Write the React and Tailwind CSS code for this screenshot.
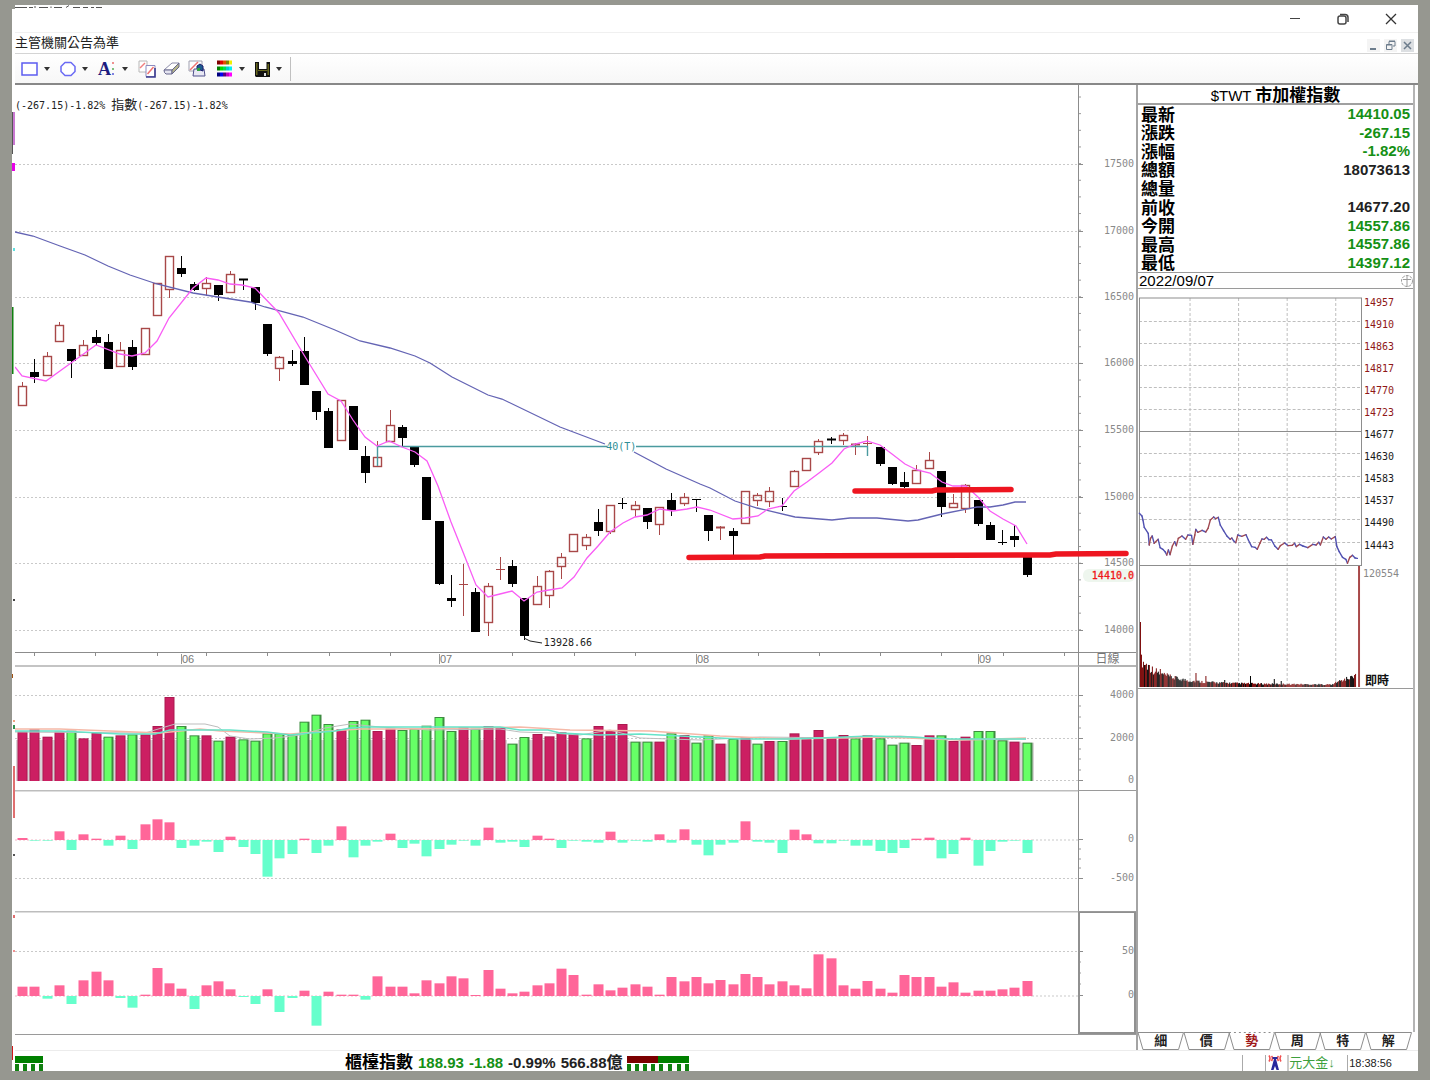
import React from "react";

const CJK = "font-['Liberation_Sans','Noto_Sans_CJK_TC',sans-serif]";
const MONO = "font-['DejaVu_Sans_Mono','Noto_Sans_CJK_TC',monospace]";

const STEP = 12.25;
const barX = (i) => 22 + STEP * i;

/* kind, high, body top, body bottom, low */
const CANDLES = [
  ["r", 382, 386, 405, 405], ["b", 359, 372, 377, 383], ["r", 352, 356, 375, 375], ["r", 322, 325, 341, 341],
  ["b", 349, 349, 361, 378], ["r", 340, 345, 355, 355], ["b", 330, 337, 343, 345], ["b", 334, 342, 369, 369],
  ["r", 342, 350, 366, 366], ["b", 340, 347, 367, 370], ["r", 328, 328, 354, 354], ["r", 283, 283, 315, 315],
  ["r", 256, 256, 289, 298], ["b", 256, 268, 274, 277], ["b", 282, 284, 290, 291], ["r", 277, 283, 288, 296],
  ["b", 285, 285, 295, 301], ["r", 271, 274, 292, 292], ["b", 279, 279, 281, 290], ["b", 287, 287, 303, 310],
  ["b", 324, 324, 354, 356], ["r", 356, 357, 368, 381], ["b", 350, 361, 364, 366], ["b", 337, 351, 385, 385],
  ["b", 391, 391, 412, 420], ["b", 408, 411, 448, 448], ["r", 400, 400, 440, 440], ["b", 406, 406, 450, 450],
  ["b", 446, 456, 473, 483], ["r", 441, 457, 466, 466], ["r", 410, 425, 441, 441], ["b", 425, 427, 438, 447],
  ["b", 447, 447, 465, 467], ["b", 477, 477, 520, 520], ["b", 521, 521, 584, 585], ["b", 575, 598, 601, 607],
  ["r", 564, 584, 584, 616], ["b", 588, 592, 632, 632], ["r", 583, 586, 622, 636], ["r", 557, 569, 569, 580],
  ["b", 560, 566, 584, 587], ["b", 598, 598, 636, 640], ["r", 576, 586, 604, 604], ["r", 570, 571, 595, 608],
  ["r", 553, 557, 566, 579], ["r", 534, 534, 551, 551], ["r", 534, 537, 545, 550], ["b", 509, 522, 531, 536],
  ["r", 505, 505, 531, 534], ["b", 498, 503, 503, 509], ["r", 501, 505, 509, 517], ["b", 508, 508, 522, 529],
  ["r", 507, 507, 524, 535], ["b", 493, 500, 510, 516], ["r", 493, 497, 503, 506], ["b", 499, 499, 499, 512],
  ["b", 515, 515, 531, 541], ["r", 526, 527, 528, 540], ["b", 528, 531, 536, 555], ["r", 491, 491, 523, 523],
  ["r", 493, 495, 500, 506], ["r", 487, 491, 501, 507], ["b", 498, 506, 506, 511], ["r", 470, 471, 486, 486],
  ["r", 458, 458, 470, 470], ["r", 439, 441, 452, 455], ["b", 437, 439, 441, 444], ["r", 433, 435, 440, 445],
  ["r", 443, 444, 445, 455], ["r", 436, 443, 443, 447], ["b", 447, 447, 464, 466], ["b", 467, 467, 484, 485],
  ["b", 472, 482, 487, 488], ["r", 465, 470, 483, 483], ["r", 452, 460, 468, 468], ["b", 471, 471, 507, 517],
  ["r", 494, 503, 507, 507], ["r", 484, 485, 508, 513], ["b", 500, 500, 524, 526], ["b", 522, 525, 540, 540],
  ["b", 530, 542, 542, 545], ["b", 525, 536, 540, 547], ["b", 556, 556, 575, 577],
];

const BLUE_A =
  "15,232 33,236 60,246 85,255 108,266 130,275 157,284 193,293 218,297 250,302 265,307 303,317 335,330 360,341 390,348 415,356 430,363 452,377 488,395 502,399 560,427 605,444";
const BLUE_B =
  "634,452 666,469 700,484 710,488 735,501 757,508 795,517 832,520 850,518 877,518 908,521 918,520 942,514 977,507 990,507 1003,505 1015,502 1026,502";
const PINK =
  "15,367 22,376 46,381 71,363 96,345 120,354 132,356 145,353 157,341 169,318 193,288 206,278 218,280 230,284 242,285 255,288 279,313 304,355 328,394 341,401 353,420 365,437 377,446 389,441 402,447 415,452 427,461 438,486 451,522 463,552 476,585 488,597 500,594 512,591 524,601 537,592 549,590 562,588 574,577 587,558 598,546 610,532 623,523 635,517 647,515 660,509 673,511 687,509 697,507 710,510 733,519 745,518 758,516 768,509 782,506 794,491 807,482 819,473 832,463 844,449 855,444 867,441 880,445 892,454 905,464 917,470 930,473 942,482 953,486 966,486 978,497 990,511 1003,519 1016,526 1027,544";

const PRICE_MARKS = [
  [164, "17500"], [231, "17000"], [297, "16500"], [363, "16000"],
  [430, "15500"], [497, "15000"], [563, "14500"], [630, "14000"],
];
const PRICE_TICKS = Array.from({ length: 33 }, (_, i) => 97 + i * 16.65);

/* r = closed up, g = closed down; the number is the bar's top in thirds of a unit */
const VOLUME = [
  "r275", "r268", "r290", "r275", "g272", "r295", "r278", "g290", "r286", "g283", "r283", "r258", "r171", "g258",
  "g286", "r286", "g302", "r290", "g298", "g302", "g280", "g280", "g284", "g245", "g224", "g252", "r268", "g243",
  "g239", "r273", "r266", "g270", "g266", "g257", "g231", "g273", "r262", "g266", "r258", "r262", "g311", "g291",
  "r282", "r289", "r277", "r282", "g295", "r258", "r272", "r252", "g305", "g305", "r305", "g280", "r285", "g308",
  "g286", "r311", "g296", "r292", "g311", "r303", "g303", "r280", "r291", "r270", "r291", "r285", "g295", "r286",
  "g295", "g314", "g308", "r315", "r286", "g286", "r303", "r290", "g273", "g273", "g301", "r305", "g308",
].map((s) => ({ up: s[0] === "r", top: 640 + Number(s.slice(1)) / 3 }));

const FLOW_A = [
  6, -2, -2, 26, -30, 17, 4, -17, 13, -27, 47, 62, 53, -24, -17, -5, -36, 10, -21, -42, -110, -55, -42, 4, -39, -17,
  41, -52, -17, -5, 19, -24, -11, -49, -27, -14, -2, -17, 37, -8, -5, -21, 13, 4, -24, -2, -5, -8, 25, -8, -2, -5, 17,
  -8, 32, -14, -46, -14, -8, 56, -5, -8, -39, 31, 17, -10, -10, -2, -17, -17, -33, -39, -24, 4, 7, -55, -42, 7, -77,
  -33, -5, -2, -39,
];
const FLOW_B = [
  28, 28, -8, 32, -24, 47, 73, 47, -6, -35, 4, 84, 38, 22, -39, 32, 44, 20, -3, -24, 20, -48, -6, 16, -89, 13, 4, 4,
  -11, 59, 28, 28, 8, 47, 38, 59, 53, 3, 78, 22, 8, 13, 32, 38, 82, 63, 4, 35, 17, 25, 35, 28, 4, 57, 44, 57, 38, 48,
  35, 66, 57, 35, 44, 32, 23, 125, 113, 32, 22, 45, 22, 10, 63, 57, 57, 28, 41, 10, 16, 16, 20, 25, 45,
];

function Plot({ top, height, label, children }) {
  return (
    <svg
      role="img"
      aria-label={label}
      className="block min-w-0 flex-1"
      height={height}
      viewBox={`15 ${top} 1063 ${height}`}
      preserveAspectRatio="none"
    >
      {children}
    </svg>
  );
}

function Grid({ y, from = 15 }) {
  return <line x1={from} x2="1078" y1={y + 0.5} y2={y + 0.5} stroke="#c9c9c9" strokeDasharray="2 2" />;
}

function Axis({ top, height, marks, ticks = [], boxed, children }) {
  return (
    <svg
      className={`block w-[58px] shrink-0 text-[10px] ${MONO}`}
      height={height}
      viewBox={`1078 ${top} 58 ${height}`}
    >
      <line x1="1078.5" x2="1078.5" y1={top} y2={top + height} stroke="#8c8c8c" />
      {ticks.map((y) => (
        <line key={y} x1="1079" x2="1081" y1={y} y2={y} stroke="#9a9a9a" />
      ))}
      {marks.map(([y, t]) => (
        <g key={t}>
          <line x1="1078" x2="1083" y1={y + 0.5} y2={y + 0.5} stroke="#8c8c8c" />
          <text x="1134" y={y + 3} textAnchor="end" fill="#8a8a8a">{t}</text>
        </g>
      ))}
      {boxed && <rect x="1079" y={top + 1} width="56" height={height - 2} fill="none" stroke="#909090" strokeWidth="2" />}
      {children}
    </svg>
  );
}

function PricePanel() {
  return (
    <div className="relative flex">
      <Plot top={85} height={567} label="日線圖">
        {PRICE_MARKS.map(([y]) => <Grid key={y} y={y} />)}
        {CANDLES.map(([kind, high, top, bottom, low], i) => {
          const x = Math.round(barX(i));
          const color = kind === "r" ? "#a84848" : "#000";
          if (bottom - top < 2.5) {
            return (
              <g key={i} stroke={color}>
                <line x1={x + 0.5} x2={x + 0.5} y1={high} y2={low} strokeWidth="1" />
                <line x1={x - 4} x2={x + 5} y1={top + 0.5} y2={top + 0.5} strokeWidth={bottom > top ? 2 : 1} />
              </g>
            );
          }
          return (
            <g key={i} stroke={color}>
              <line x1={x + 0.5} x2={x + 0.5} y1={high} y2={top} />
              <line x1={x + 0.5} x2={x + 0.5} y1={bottom} y2={low} />
              <rect x={x - 3.5} y={top + 0.5} width="8" height={bottom - top - (kind === "b" ? 1 : 0)} fill={kind === "r" ? "none" : "#000"} strokeWidth={kind === "r" ? 1.4 : 1} />
            </g>
          );
        })}
        <path d="M377.5 466V446.5H607M636 446.5H867.5V456" fill="none" stroke="#4a9a9f" strokeWidth="1.4" />
        <polyline points={BLUE_A} fill="none" stroke="#6464b4" strokeWidth="1.3" />
        <polyline points={BLUE_B} fill="none" stroke="#6464b4" strokeWidth="1.3" />
        <polyline points={PINK} fill="none" stroke="#f95cf5" strokeWidth="1.3" />
        <polyline points="524,638 530,641 542,643" fill="none" stroke="#222" />
      </Plot>
      <Axis top={85} height={567} marks={PRICE_MARKS} ticks={PRICE_TICKS}>
        <rect x="1083" y="569" width="52" height="13" rx="6" fill="#eef6ee" />
        <text x="1134" y="579" textAnchor="end" fill="#f01818" stroke="#f01818" strokeWidth="0.3">14410.0</text>
      </Axis>
      <svg
        className="absolute inset-0 h-full w-full"
        viewBox="15 85 1121 567"
        preserveAspectRatio="none"
        fill="none"
        stroke="#ee1520"
        strokeWidth="5.5"
        strokeLinecap="round"
        aria-hidden="true"
      >
        <path d="M855 491H932L936 490L1011 489.5" />
        <path d="M689 557.5L760 557L765 556L905 555.5L1050 555L1056 554L1126 553.5" />
      </svg>
      <span className={`absolute left-[53%] top-[354px] -ml-[3px] text-[10px] text-[#2f8f96] ${MONO}`}>40(T)</span>
      <span className={`absolute left-[47%] top-[550px] ml-[2px] text-[10px] text-[#222] ${MONO}`}>13928.66</span>
    </div>
  );
}

const DATE_TICKS = [34, 95, 157, 206, 267, 329, 390, 512, 574, 635, 758, 819, 880, 941, 1003, 1064];
const MONTHS = [[181, "06"], [439, "07"], [696, "08"], [978, "09"]];

function DateStrip() {
  return (
    <div className="flex">
      <div className="relative flex min-w-0 flex-1">
        <Plot top={652} height={15} label="月份">
          <line x1="15" x2="1078" y1="652.5" y2="652.5" stroke="#8c8c8c" />
          <line x1="15" x2="1078" y1="666" y2="666" stroke="#c4c4c4" strokeWidth="2" />
          {DATE_TICKS.map((x) => <line key={x} x1={x + 0.5} x2={x + 0.5} y1="653" y2="656" stroke="#8c8c8c" />)}
        </Plot>
        {MONTHS.map(([x, t]) => (
          <span
            key={t}
            className="absolute top-[2px] h-[10px] border-l border-[#999] text-[11px] leading-[10px] text-[#777] font-['Liberation_Sans',sans-serif]"
            style={{ left: `${((x - 15) / 1063) * 100}%` }}
          >
            {t}
          </span>
        ))}
      </div>
      <div className={`h-[15px] w-[58px] shrink-0 border-b-2 border-l border-t border-b-[#b4b4b4] border-l-[#8c8c8c] border-t-[#8c8c8c] text-center text-[12px] leading-[13px] text-[#777] ${CJK}`}>
        日線
      </div>
    </div>
  );
}

function VolumePanel() {
  return (
    <div className="flex">
      <Plot top={667} height={123} label="成交量">
        <Grid y={695} />
        <Grid y={738} />
        <Grid y={780} from={1032} />
        {VOLUME.map((v, i) => {
          const x = Math.round(barX(i));
          return (
            <g key={i}>
              <rect x={x - 6} y={Math.max(v.top, 740)} width="13" height={781 - Math.max(v.top, 740)} fill="#d9d3d6" />
              <rect x={x - 4.5} y={v.top} width="10" height={781 - v.top} fill={v.up ? "#ac1a50" : "#3d8c40"} />
              <rect x={x - 3.5} y={v.top + 1} width={v.up ? 8 : 7} height={780 - v.top} fill={v.up ? "#cc1f62" : "#66ff66"} />
            </g>
          );
        })}
        <polyline fill="none" stroke="#bdbdbd" points="15,732 145,733 165,727 175,724 205,724 218,727 230,736 250,739 275,738 300,735 325,728 350,724 380,727 430,730 500,729 520,732 550,733 580,735 610,730 640,738 700,740 760,737 850,738 900,736 960,740 1026,739" />
        <polyline fill="none" stroke="#f5b9a8" strokeWidth="1.5" points="15,729 60,729 110,731 160,733 180,731 200,729 220,731 290,734 330,731 360,729 400,729 470,728 520,727 570,730 650,731 720,736 790,739 880,737 960,740 1026,738" />
        <polyline fill="none" stroke="#66e3c8" strokeWidth="1.5" points="15,731 60,731 120,734 155,734 170,730 230,730 267,732 290,735 310,733 335,731 350,728 365,727 500,727 520,730 548,730 560,733 600,735 640,734 680,736 720,738 740,739 790,739 820,738 870,736 910,737 950,739 1026,739" />
      </Plot>
      <Axis top={667} height={123} marks={[[695, "4000"], [738, "2000"], [780, "0"]]} ticks={[706, 717, 728, 749, 759, 770]} />
    </div>
  );
}

function FlowPanel({ top, height, zero, grid, data, label, marks, ticks, boxed }) {
  return (
    <div className="flex">
      <Plot top={top} height={height} label={label}>
        <line x1="15" x2="1078" y1={top + 0.5} y2={top + 0.5} stroke="#bdbdbd" strokeWidth="2" />
        <Grid y={grid} />
        <line x1="15" x2="1032" y1={zero} y2={zero} stroke="#f3b6c6" strokeDasharray="2 2" />
        <Grid y={zero - 0.5} from={1032} />
        {data.map((v, i) => {
          const h = Math.abs(v) / 3;
          return (
            <rect key={i} x={Math.round(barX(i)) - 4.5} y={v > 0 ? zero - h : zero} width="10" height={h} fill={v > 0 ? "#ff6699" : "#66ffcc"} />
          );
        })}
      </Plot>
      <Axis top={top} height={height} marks={marks} ticks={ticks} boxed={boxed}>
        <line x1="1078" x2="1136" y1={top + 0.5} y2={top + 0.5} stroke="#9a9a9a" />
      </Axis>
    </div>
  );
}

const QUOTES = [
  ["最新", "14410.05", true], ["漲跌", "-267.15", true], ["漲幅", "-1.82%", true],
  ["總額", "18073613", false], ["總量", "", false], ["前收", "14677.20", false],
  ["今開", "14557.86", true], ["最高", "14557.86", true], ["最低", "14397.12", true],
];

const LEVELS = [
  [302, "14957"], [324, "14910"], [346, "14863"], [368, "14817"], [390, "14770"], [412, "14723"],
  [434, "14677"], [456, "14630"], [478, "14583"], [500, "14537"], [522, "14490"], [545, "14443"],
];

const INTRADAY = [
  [205, 700], [213, 708], [216, 720], [220, 742], [232, 760], [235, 795], [239, 775], [244, 768], [250, 790], [262, 778],
  [268, 803], [276, 808], [283, 815], [288, 825], [293, 810], [298, 824], [305, 798], [312, 785], [317, 797], [323, 775],
  [334, 768], [345, 778], [352, 765], [363, 766], [367, 793], [373, 765], [376, 748], [382, 757], [395, 751], [406, 756],
  [413, 745], [420, 720], [430, 711], [436, 716], [444, 712], [450, 735], [460, 752], [470, 768], [480, 778], [485, 774],
  [490, 782], [497, 788], [503, 765], [515, 769], [528, 764], [535, 780], [545, 800], [555, 802], [562, 808], [570, 790],
  [576, 777], [583, 778], [590, 772], [597, 779], [605, 780], [615, 798], [625, 808], [632, 797], [645, 789], [655, 797],
  [668, 796], [675, 790], [680, 800], [690, 793], [700, 798], [715, 803], [730, 793], [740, 795], [748, 787], [753, 795],
  [762, 771], [770, 778], [778, 771], [786, 777], [798, 770], [803, 800], [810, 815], [820, 832], [830, 838], [835, 850],
  [842, 832], [850, 826], [858, 834], [865, 835],
].map(([x, y]) => [1070 + x / 3, 280 + y / 3]);

const MINI_VOLUME = Array.from({ length: 218 }, (_, i) => {
  const noise = Math.abs(Math.sin(i * 12.9898) * 43758.5453) % 1;
  const base = 2 + 22 * Math.exp(-i / 20) + 5 * Math.exp(-i / 90) + (i > 195 ? (i - 190) / 3 : 0);
  const spike = { 9: 22, 20: 18, 35: 11, 56: 14, 66: 11, 85: 7, 111: 11, 135: 8, 142: 6, 216: 12 }[i] || 0;
  return { h: i === 0 ? 65 : Math.max(spike, base * (0.7 + noise * 0.5)), red: i < 4 || (noise * 97) % 1 > 0.5 };
});

function IntradayChart() {
  return (
    <div className="flex h-[400px] border-b border-[#9a9a9a]">
      <svg role="img" aria-label="即時走勢" className="block min-w-0 flex-1" height="399" viewBox="1137 289 227 399" preserveAspectRatio="none">
        {[321, 343, 365, 387, 409, 453, 476, 497, 519, 542].map((y) => (
          <line key={y} x1="1138" x2="1363" y1={y + 0.5} y2={y + 0.5} stroke="#bdbdbd" strokeDasharray="3 2" />
        ))}
        {[1189, 1238, 1287, 1336].map((x) => (
          <line key={x} x1={x + 0.5} x2={x + 0.5} y1="298" y2="687" stroke="#bdbdbd" strokeDasharray="3 2" />
        ))}
        <path d="M1138 298H1363M1362.5 298V566M1138.5 298V687M1138 431.5H1363M1138 565.5H1363" fill="none" stroke="#8c8c8c" />
        {INTRADAY.slice(1).map(([x, y], i) => (
          <line key={i} x1={INTRADAY[i][0]} y1={INTRADAY[i][1]} x2={x} y2={y} stroke={y < INTRADAY[i][1] ? "#a04850" : "#5050b0"} strokeWidth="1.4" strokeLinecap="round" />
        ))}
        {MINI_VOLUME.map((b, i) => (
          <rect key={i} x={1139 + i} y={687 - b.h} width="1" height={b.h} fill={b.red ? "#7c0a0a" : "#000"} />
        ))}
        <rect x="1359" y="566" width="2" height="121" fill="#a84848" />
      </svg>
      <svg className={`block w-[50px] shrink-0 text-[10px] ${MONO}`} height="399" viewBox="1364 289 50 399">
        {LEVELS.map(([y, t], i) => (
          <text key={t} x="1365" y={y + 4} fill={i < 6 ? "#8f1818" : "#1a1a1a"}>{t}</text>
        ))}
        <text x="1364" y="577" fill="#888">120554</text>
        <text x="1366" y="685" fontSize="12" fontWeight="bold" fill="#111">即時</text>
      </svg>
    </div>
  );
}

function SidePanel() {
  return (
    <aside className="flex w-[279px] shrink-0 flex-col border-l-2 border-[#a4a4a4]">
      <div className="flex flex-1 flex-col border-r-2 border-[#b4b4b4]">
        <h1 className={`h-5 border-b-2 border-[#a0a0a0] text-center text-[15px] font-medium leading-[21px] text-black ${CJK}`}>
          $TWT <span className="text-[17px] font-bold">市加權指數</span>
        </h1>
        <dl className={`flex h-[167px] flex-col ${CJK}`}>
          {QUOTES.map(([name, value, down]) => (
            <div key={name} className="flex min-h-0 flex-1 items-center justify-between pl-[3px] pr-[3px]">
              <dt className="pt-[3px] text-[17px] font-bold leading-[18px] text-black">{name}</dt>
              <dd className={down ? "text-[15px] font-bold leading-[18px] text-[#159015]" : "text-[15px] font-bold leading-[18px] text-[#222]"}>{value}</dd>
            </div>
          ))}
        </dl>
        <div className={`flex h-[17px] items-center justify-between border-y border-[#9a9a9a] pl-px text-black ${CJK}`}>
          <time dateTime="2022-09-07" className="text-[15px] leading-[15px]">2022/09/07</time>
          <svg width="13" height="14" viewBox="0 0 13 14" fill="none" stroke="#9a9a9a" aria-hidden="true">
            <circle cx="7" cy="7" r="5.5" strokeDasharray="3 1" />
            <path d="M7 1v12M3 5.500h8" />
          </svg>
        </div>
        <IntradayChart />
      </div>
      <Tabs />
    </aside>
  );
}

function Tabs() {
  return (
    <div role="tablist" className="flex h-[18px] pr-1">
      {["細", "價", "勢", "周", "特", "解"].map((t) => {
        const on = t === "勢";
        return (
          <button key={t} type="button" role="tab" aria-selected={on} className="relative flex h-[18px] min-w-0 flex-1 items-center justify-center">
            <svg className="absolute inset-0 h-full w-full overflow-visible" viewBox="0 0 46 18" preserveAspectRatio="none" fill="none" stroke="#8c8c8c" aria-hidden="true">
              <path d="M0 0.5L5 17.5H41L46 0.5" />
              <path d="M0 0.5H46" strokeDasharray={on ? "2 3" : "none"} />
            </svg>
            <span className={on ? `relative text-[13px] font-bold leading-[16px] text-[#a01818] ${CJK}` : `relative text-[13px] font-bold leading-[16px] text-[#222] ${CJK}`}>{t}</span>
          </button>
        );
      })}
    </div>
  );
}

function Caret() {
  return (
    <svg width="6" height="4" viewBox="0 0 6 4" aria-hidden="true"><path d="M0 0H6L3 4Z" fill="#333" /></svg>
  );
}

function Tool({ label, menu, children }) {
  return (
    <button type="button" aria-label={label} className="flex items-center gap-1.5">
      {children}
      {menu && <Caret />}
    </button>
  );
}

function Toolbar() {
  const dots = ["#800000", "#e00000", "#e05000", "#808000", "#f0f000", "#008000", "#00e000", "#00e050", "#00d0d0", "#00f0f0", "#000080", "#0000f0", "#500080", "#c000c0", "#ff00ff"];
  return (
    <div role="toolbar" className="flex h-[31px] items-center border-b-2 border-[#888] bg-gradient-to-b from-white to-[#f7f7f7] pl-1.5">
      <div className="flex items-center gap-2.5">
        <Tool label="矩形" menu>
          <svg width="17" height="16" viewBox="0 0 17 16"><rect x="1" y="2" width="15" height="12" fill="#fff" stroke="#5c5cf0" strokeWidth="1.5" /></svg>
        </Tool>
        <Tool label="圓形" menu>
          <svg width="16" height="16" viewBox="0 0 16 16"><path d="M5 1.500h6l4 4v5l-4 4H5l-4-4v-5z" fill="#fff" stroke="#6a6af4" strokeWidth="1.5" strokeLinejoin="round" /></svg>
        </Tool>
        <Tool label="文字" menu>
          <span className="flex w-[18px] items-center">
            <span className="text-[18px] font-bold leading-4 text-[#1c1c80] font-['Liberation_Serif',serif]">A</span>
            <svg width="4" height="16" viewBox="0 0 4 16"><path d="M1 1h2v2H1z" fill="#f09090" /><path d="M1 7h2v2H1z" fill="#80c080" /><path d="M1 12h2v2H1z" fill="#8080e0" /></svg>
          </span>
        </Tool>
        <div className="flex items-center gap-[7px]">
          <Tool label="複製線段">
            <svg width="18" height="18" viewBox="0 0 18 18" fill="none">
              <path d="M1 1h8v11H1z" fill="#fff" stroke="#b8b8b8" />
              <path d="M2 8l5-5" stroke="#f08080" strokeWidth="1.5" />
              <path d="M8 5.500h9v11H8z" fill="#fff" stroke="#8c8cc0" />
              <path d="M9.500 14l6-7" stroke="#f07070" strokeWidth="1.5" />
              <path d="M17 8v9H8" stroke="#3c3c90" strokeWidth="1.6" />
            </svg>
          </Tool>
          <Tool label="橡皮擦">
            <svg width="18" height="16" viewBox="0 0 18 16" strokeLinejoin="round">
              <path d="M1 9l8-7h7l-7 7z" fill="#fff" stroke="#8a8aa8" />
              <path d="M1 9h8v4H3q-2-1-2-4z" fill="#e4e4f0" stroke="#66668c" />
              <path d="M9 9l7-7v4l-7 7z" fill="#b4b48c" stroke="#66668c" />
            </svg>
          </Tool>
          <Tool label="移除線段">
            <svg width="18" height="17" viewBox="0 0 18 17" fill="none">
              <path d="M1 1h13v10H1z" fill="#fff" stroke="#a0a0b0" />
              <path d="M2 10l8-8" stroke="#f07070" strokeWidth="1.5" />
              <path d="M6 9h10l1 7H5z" fill="#e8e8f4" stroke="#50508c" />
              <path d="M9 9V6l3-2 3 2v5z" fill="#1c5c8c" stroke="#1c1c70" />
              <path d="M9 8h3v3H9z" fill="#30a040" />
            </svg>
          </Tool>
        </div>
        <Tool label="顏色" menu>
          <svg width="17" height="17" viewBox="0 0 17 17">
            {dots.map((c, i) => (
              <rect key={i} x={1 + (i % 5) * 3} y={0.5 + Math.floor(i / 5) * 6} width="3" height="4" fill={c} />
            ))}
          </svg>
        </Tool>
        <Tool label="儲存" menu>
          <svg width="15" height="16" viewBox="0 0 15 16">
            <path d="M0 1h15v15H1l-1-1z" fill="#111" />
            <path d="M1 2h1.500v12H1zM12.500 3H14v11h-1.500z" fill="#66661c" />
            <path d="M4 1h7.500v7H4z" fill="#fff" />
            <path d="M3 9h9.500v1H3z" fill="#66661c" />
            <path d="M9 12h2v3H9z" fill="#ddd" />
          </svg>
        </Tool>
      </div>
      <span className="ml-2 h-6 border-l border-[#c0c0c0]" />
    </div>
  );
}

function EdgeMarks() {
  return (
    <svg className="block w-[3px] shrink-0" width="3" height="1066" viewBox="12 5 3 1066" aria-hidden="true">
      <rect x="12" y="5" width="3" height="4" fill="#969790" />
      <rect x="12" y="112" width="1" height="42" fill="#555" />
      <rect x="13" y="112" width="2" height="33" fill="#c878d0" />
      <rect x="12" y="163" width="3" height="8" fill="#e800e8" />
      <rect x="13" y="248" width="2" height="3" fill="#60e0e0" />
      <rect x="12" y="307" width="1.5" height="67" fill="#108010" />
      <rect x="13" y="599" width="2" height="2" fill="#444" />
      <rect x="12" y="674" width="1" height="4" fill="#a05010" />
      <rect x="13" y="720" width="2" height="2" fill="#f0a080" />
      <rect x="13" y="725" width="2" height="4" fill="#309050" />
      <rect x="13" y="766" width="2" height="52" fill="#e07070" />
      <rect x="13" y="854" width="2" height="2" fill="#555" />
      <rect x="13" y="915" width="2" height="3" fill="#e07070" />
      <rect x="13" y="950" width="2" height="2" fill="#f09090" />
      <rect x="12" y="1046" width="1" height="14" fill="#d01818" />
    </svg>
  );
}

function Meter({ split }) {
  const w = split ? 62 : 28;
  const teeth = split ? [0, 8, 16, 24, 32, 41, 50, 58] : [0, 8, 16, 24];
  return (
    <svg width={w} height="15" viewBox={`0 0 ${w} 15`} className="mt-1 shrink-0" aria-hidden="true">
      <rect width={w} height="7" fill="#008000" />
      {split && <rect width="31" height="7" fill="#7c0000" />}
      {teeth.map((x) => <rect key={x} x={x} y="8" width="4" height="7" fill="#108010" />)}
    </svg>
  );
}

function StatusBar() {
  return (
    <footer className={`flex h-[21px] items-center overflow-hidden border-t border-[#ececec] ${CJK}`}>
      <Meter />
      <p className="ml-[302px] mr-1 mt-1 flex items-center gap-[5px] whitespace-nowrap text-[15px] font-bold leading-5 text-[#222]">
        <span className="text-[17px] text-black">櫃檯指數</span>
        <span className="text-[#159015]">188.93</span>
        <span className="text-[#159015]">-1.88</span>
        <span>-0.99%</span>
        <span>566.88<span className="text-[16px]">億</span></span>
      </p>
      <Meter split />
      <div className="ml-auto mr-[26px] mt-1 flex h-4 items-center">
        <span className="h-4 w-[23px] border-l border-[#aaa]" />
        <span className="flex h-4 w-[22px] justify-start border-l border-[#aaa] pl-[2px]">
          <svg width="14" height="15" viewBox="0 0 14 15" fill="none" aria-hidden="true">
            <path d="M1 0.5q2 3 0 6M3.5 1q2 2 0 5M13 0.5q-2 3 0 6M10.5 1q-2 2 0 5" stroke="#f05050" strokeWidth="1.6" />
            <path d="M4.500 2h5v2h-1.500l3 11H8.500l-1.500-4-1.500 4H3l3-11H4.500z" fill="#28289c" />
          </svg>
        </span>
        <span className="flex h-4 w-[60px] items-center border-l-2 border-[#ccc] text-[13px] leading-4 text-[#3da03d]">元大金↓</span>
        <time className="flex h-4 items-center border-l border-[#aaa] pl-px text-[11px] text-[#222]">18:38:56</time>
      </div>
    </footer>
  );
}

function TitleBar() {
  return (
    <header>
      <div className="relative flex h-7 items-center justify-end border-b border-[#f0f0f0] pr-[18px]">
        <svg className="absolute left-0 top-0" width="87" height="3" viewBox="0 0 87 3" aria-hidden="true">
          <path d="M0 2.5h12M14 2.5h4M20 1v2M24 2.5h9M36 1.5v1.5M39 2.5h8M51 2.5l3-2M58 2.5h7M68 2.5h5M76 2.5h3M81 2.5h6" stroke="#555" />
        </svg>
        <div className="flex items-center gap-[30px]">
          <button type="button" aria-label="最小化" className="flex h-5 w-[18px] items-center justify-center">
            <svg width="12" height="12" viewBox="0 0 12 12" stroke="#444"><path d="M1 5.500h10" /></svg>
          </button>
          <button type="button" aria-label="還原" className="flex h-5 w-[18px] items-center justify-center">
            <svg width="12" height="12" viewBox="0 0 12 12" fill="none" stroke="#444" strokeWidth="1.5"><rect x="1" y="3" width="8" height="8" rx="2" /><path d="M3 1.500h5q3 0 3 3V9" /></svg>
          </button>
          <button type="button" aria-label="關閉" className="flex h-5 w-[18px] items-center justify-center">
            <svg width="12" height="12" viewBox="0 0 12 12" stroke="#333" strokeWidth="1.3"><path d="M1 1l10 10M11 1L1 11" /></svg>
          </button>
        </div>
      </div>
      <div className={`flex h-[21px] items-center justify-between border-b border-[#d4d4d4] pr-1 text-[13px] leading-5 text-[#222] ${CJK}`}>
        <span>主管機關公告為準</span>
        <div className="flex gap-1 pt-1">
          <button type="button" aria-label="最小化圖表" className="bg-[#f4f4f4]">
            <svg width="13" height="13" viewBox="0 0 13 13" stroke="#6c7c8c" strokeWidth="2"><path d="M3 10h6" /></svg>
          </button>
          <button type="button" aria-label="還原圖表" className="bg-[#f4f4f4]">
            <svg width="13" height="13" viewBox="0 0 13 13" fill="none" stroke="#6c7c8c"><path d="M5 5V2.500h6V7H9M5 2h6" /><path d="M2.500 5.500h5.500v5H2.500zM2.500 6h5" /></svg>
          </button>
          <button type="button" aria-label="關閉圖表" className="bg-[#dcdfe2]">
            <svg width="13" height="13" viewBox="0 0 13 13" stroke="#6c7c8c" strokeWidth="1.5"><path d="M3 3l7 7M10 3l-7 7" /></svg>
          </button>
        </div>
      </div>
    </header>
  );
}

export default function App() {
  return (
    <div className="min-h-screen bg-[#969790] px-3 pb-[9px] pt-[5px]">
      <div className="flex bg-white">
        <EdgeMarks />
        <div className="flex min-w-0 flex-1 flex-col">
          <TitleBar />
          <Toolbar />
          <main className="flex pr-[3px]">
            <section className="relative min-w-0 flex-1">
              <p className={`absolute left-0 top-3 text-[10px] leading-4 text-[#222] ${MONO}`}>
                (-267.15)-1.82% <span className="text-[13px]">指數</span>(-267.15)-1.82%
              </p>
              <PricePanel />
              <DateStrip />
              <VolumePanel />
              <FlowPanel top={790} height={121} zero={840} grid={878} data={FLOW_A} label="買賣超" marks={[[839, "0"], [878, "-500"]]} ticks={[849, 859, 868]} />
              <FlowPanel top={911} height={123} zero={996} grid={951} data={FLOW_B} label="資金流" marks={[[951, "50"], [995, "0"]]} ticks={[962, 973, 984]} boxed />
              <div className="h-4 border-t border-[#9a9a9a]" />
            </section>
            <SidePanel />
          </main>
          <StatusBar />
        </div>
      </div>
    </div>
  );
}
